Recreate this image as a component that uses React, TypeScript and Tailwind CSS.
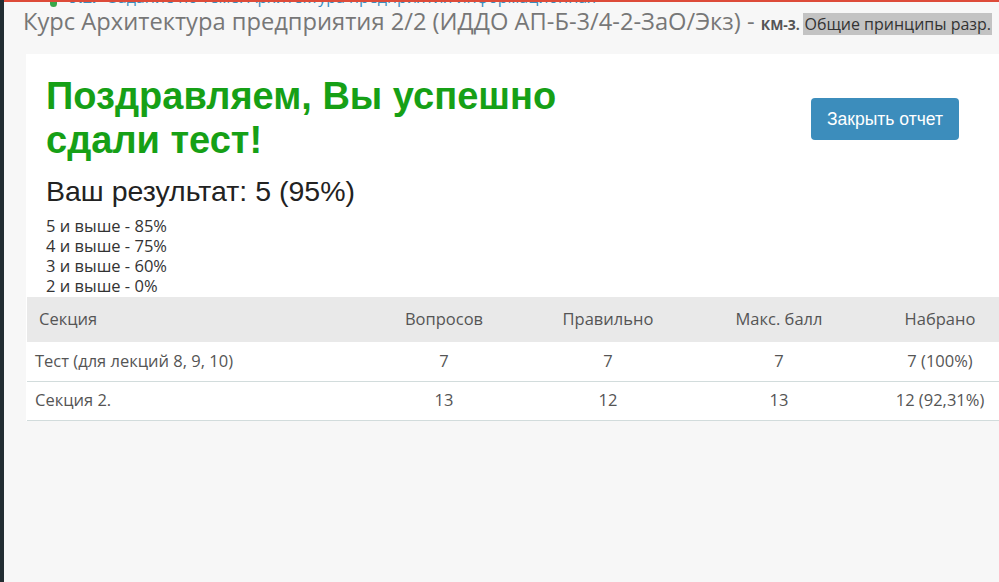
import React from "react"

const proxima = { fontFamily: '"Open Sans", "Noto Sans", sans-serif' }
const arial = { fontFamily: '"Liberation Sans", Arial, sans-serif' }

const grades = ["5 и выше - 85%", "4 и выше - 75%", "3 и выше - 60%", "2 и выше - 0%"]

const rows = [
  { name: "Тест (для лекций 8, 9, 10)", q: "7", ok: "7", max: "7", got: "7 (100%)" },
  { name: "Секция 2.", q: "13", ok: "12", max: "13", got: "12 (92,31%)" },
]

export default function App() {
  return (
    <div className="flex h-[582px] w-[999px] overflow-hidden bg-[#f7f7f7]" style={proxima}>
      {/* sidebar edge */}
      <div className="w-[4px] shrink-0 bg-[#222d32]" />

      <div className="flex min-w-0 flex-1 flex-col">
        {/* clipped breadcrumb strip */}
        <div className="h-[2px] bg-[#dd4b39]" />
        <div className="flex h-[5px] items-end gap-3 overflow-hidden pl-[46px] text-[16px] leading-[20px]">
          <span className="inline-block h-[12px] w-[7px] rounded-sm bg-[#3aa64a]" />
          <span className="font-bold text-[#3c8dbc]">9.2.</span>
          <span className="whitespace-nowrap text-[#3c8dbc]">Задание по теме: Архитектура предприятия информационная</span>
        </div>

        {/* title */}
        <div className="-mt-[1px] flex items-baseline whitespace-nowrap pl-[19px] leading-[30px]">
          <span className="text-[23.7px] text-[#777]">Курс Архитектура предприятия 2/2 (ИДДО АП-Б-3/4-2-ЗаО/Экз) -&nbsp;</span>
          <span className="text-[14px] font-bold text-[#555]">КМ-3.&nbsp;</span>
          <span className="bg-[#c3c3c3] px-[1px] text-[16px] leading-[22px] text-[#333]">Общие принципы разр.</span>
        </div>

        {/* report card */}
        <div className="ml-[22px] mt-[14px] w-[1000px] bg-white">
          <div className="flex items-start justify-between pl-[20px] pr-[67px] pt-[20px]">
            <div>
              <h1 className="w-[560px] text-[38px] font-bold leading-[44px] text-[#16a016]" style={arial}>
                Поздравляем, Вы успешно сдали тест!
              </h1>
              <div className="mt-[12px] text-[28.5px] leading-[34px] text-[#222]" style={arial}>
                Ваш результат: 5 (95%)
              </div>
              <div className="mt-[8px] text-[16.5px] leading-[20px] text-[#333]">
                {grades.map((g) => (
                  <div key={g}>{g}</div>
                ))}
              </div>
            </div>
            <button
              className="mt-[24px] h-[42px] w-[148px] rounded-[4px] bg-[#3c8dbc] text-[17.5px] text-white"
              style={arial}
            >
              Закрыть отчет
            </button>
          </div>

          <table className="ml-[1px] mt-[1px] table-fixed border-collapse text-[16.5px] text-[#555]">
            <colgroup>
              <col className="w-[337px]" />
              <col className="w-[160px]" />
              <col className="w-[168px]" />
              <col className="w-[174px]" />
              <col className="w-[148px]" />
            </colgroup>
            <thead>
              <tr className="h-[45px] bg-[#e9e9e9]">
                <th className="pl-[12px] text-left font-normal">Секция</th>
                <th className="text-center font-normal">Вопросов</th>
                <th className="text-center font-normal">Правильно</th>
                <th className="text-center font-normal">Макс. балл</th>
                <th className="text-center font-normal">Набрано</th>
              </tr>
            </thead>
            <tbody>
              {rows.map((r) => (
                <tr key={r.name} className="h-[39px] border-b border-[#d2dcdc]">
                  <td className="pl-[8px] text-left">{r.name}</td>
                  <td className="text-center">{r.q}</td>
                  <td className="text-center">{r.ok}</td>
                  <td className="text-center">{r.max}</td>
                  <td className="text-center">{r.got}</td>
                </tr>
              ))}
            </tbody>
          </table>
        </div>
      </div>
    </div>
  )
}
